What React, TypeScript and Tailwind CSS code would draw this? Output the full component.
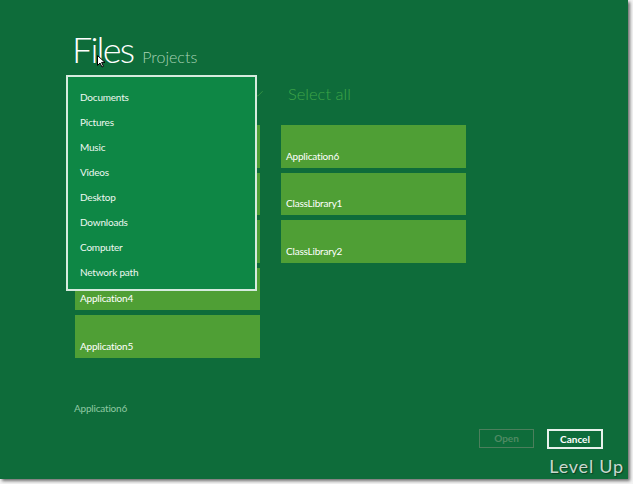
import { Check } from 'lucide-react'

// first three sit behind the location dropdown
const leftTiles = ['', '', '', 'Application4', 'Application5']
const rightTiles = ['Application6', 'ClassLibrary1', 'ClassLibrary2']
const places = ['Documents', 'Pictures', 'Music', 'Videos', 'Desktop', 'Downloads', 'Computer', 'Network path']

function Tile({ label }: { label: string }) {
  return (
    <div className="w-[185px] h-[42.5px] bg-[#4f9f35] flex items-end px-[5px] pb-[7px]">
      <span className="text-[10px] tracking-[-0.2px] text-white leading-none">{label}</span>
    </div>
  )
}

export default function App() {
  return (
    <div className="w-[633px] h-[484px] bg-[#f4f4f4] font-['Lato',sans-serif]">
      <div className="relative w-[628px] h-[479px] bg-[#0e6c3a] shadow-[2px_2px_3px_rgba(0,0,0,0.55)] flex flex-col">

        {/* Header */}
        <div className="flex items-baseline pl-[72px] pt-[31px] gap-[9px]">
          <h1 className="text-[36px] font-light tracking-[-1.8px] text-white leading-none">Files</h1>
          <span className="text-[16px] font-light text-[#a7d3b4] leading-none">Projects</span>
        </div>

        {/* Select all row */}
        <div className="flex items-center h-[22px] mt-[16px] pl-[254px]">
          <Check className="w-[10px] h-[10px] text-[#3c9a45]" strokeWidth={2} />
          <span className="ml-[24px] text-[16.5px] font-light text-[#3ea548] leading-none">Select all</span>
        </div>

        {/* Tiles */}
        <div className="flex gap-[21px] pl-[75px] mt-[20px]">
          <div className="flex flex-col gap-[5px]">
            {leftTiles.map((t, i) => <Tile key={i} label={t} />)}
          </div>
          <div className="flex flex-col gap-[5px]">
            {rightTiles.map((t) => <Tile key={t} label={t} />)}
          </div>
        </div>

        {/* Selected */}
        <div className="pl-[74px] mt-[43px] text-[10px] tracking-[-0.2px] text-[#8fc9a3]">Application6</div>

        {/* Buttons */}
        <div className="flex justify-end gap-[13px] pr-[25px] mt-[13px]">
          <button className="w-[55px] h-[19px] border border-[#4b7f5c] text-[10px] text-[#4f8a63] font-bold leading-none">Open</button>
          <button className="w-[56px] h-[20px] border-2 border-[#e8f2ec] text-[10px] text-white font-bold leading-none">Cancel</button>
        </div>

        <div className="self-end pr-[4px] mt-[8px] text-[18px] text-[#c9d8cf] leading-none tracking-[0.8px] [text-shadow:1px_1px_1px_rgba(0,0,0,0.4)]">
          Level Up
        </div>

        {/* Location dropdown */}
        <div className="absolute left-[66px] top-[75px] w-[191px] h-[216px] bg-[#0e8745] border-2 border-[#d6ebde] flex flex-col pt-[8px] pl-[12px]">
          {places.map((p) => (
            <div key={p} className="h-[25px] flex items-center text-[10px] tracking-[-0.2px] text-[#eef7f1]">{p}</div>
          ))}
        </div>

        {/* Cursor */}
        <svg className="absolute left-[97px] top-[55px]" width="9" height="13" viewBox="0 0 9 13">
          <path d="M0.5 0.5 L0.5 10.5 L3 8 L5 12 L6.5 11.3 L4.6 7.4 L8 7.4 Z" fill="#fff" stroke="#000" strokeWidth="1" />
        </svg>
      </div>
    </div>
  )
}
